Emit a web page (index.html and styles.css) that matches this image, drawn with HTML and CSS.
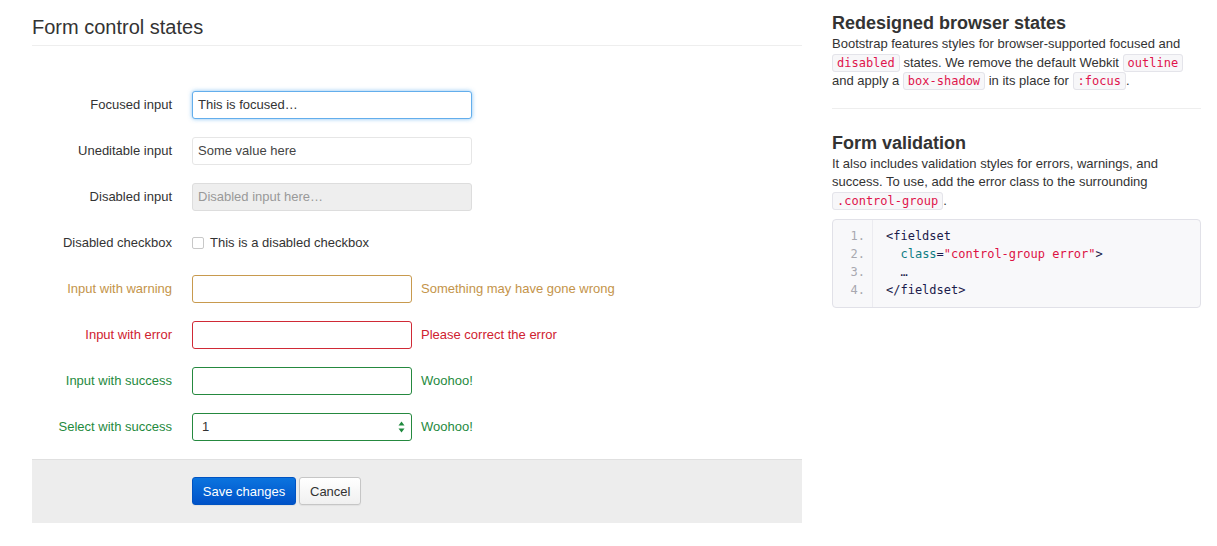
FILE: index.html
```html
<!DOCTYPE html>
<html lang="en">
<head>
<meta charset="utf-8">
<title>Form control states</title>
<link rel="stylesheet" href="styles.css">
</head>
<body>
<div class="page">
  <main class="main">
    <h2 class="title">Form control states</h2>
    <form class="form">
      <div class="group">
        <div class="label">Focused input</div>
        <div class="controls"><div class="input input-xl is-focused">This is focused…</div></div>
      </div>
      <div class="group">
        <div class="label">Uneditable input</div>
        <div class="controls"><div class="input input-xl is-uneditable">Some value here</div></div>
      </div>
      <div class="group">
        <div class="label">Disabled input</div>
        <div class="controls"><div class="input input-xl is-disabled">Disabled input here…</div></div>
      </div>
      <div class="group">
        <div class="label">Disabled checkbox</div>
        <div class="controls"><span class="checkbox"></span><span class="check-text">This is a disabled checkbox</span></div>
      </div>
      <div class="group warning">
        <div class="label">Input with warning</div>
        <div class="controls"><div class="input"></div><span class="help">Something may have gone wrong</span></div>
      </div>
      <div class="group error">
        <div class="label">Input with error</div>
        <div class="controls"><div class="input"></div><span class="help">Please correct the error</span></div>
      </div>
      <div class="group success">
        <div class="label">Input with success</div>
        <div class="controls"><div class="input"></div><span class="help">Woohoo!</span></div>
      </div>
      <div class="group success">
        <div class="label">Select with success</div>
        <div class="controls">
          <div class="input select"><span class="select-value">1</span>
            <svg class="select-arrows" width="7" height="12" viewBox="0 0 7 12"><path d="M3.5 0.5 L6.5 4.5 L0.5 4.5 Z M3.5 11.5 L6.5 7.5 L0.5 7.5 Z" fill="currentColor"/></svg>
          </div>
          <span class="help">Woohoo!</span>
        </div>
      </div>
      <div class="actions">
        <button type="button" class="btn btn-primary">Save changes</button>
        <button type="button" class="btn">Cancel</button>
      </div>
    </form>
  </main>
  <aside class="side">
    <h3 class="side-title">Redesigned browser states</h3>
    <p class="side-text">Bootstrap features styles for browser-supported focused and <code>disabled</code> states. We remove the default Webkit <code>outline</code> and apply a <code>box-shadow</code> in its place for <code>:focus</code>.</p>
    <hr class="rule">
    <h3 class="side-title">Form validation</h3>
    <p class="side-text">It also includes validation styles for errors, warnings, and success. To use, add the error class to the surrounding <code>.control-group</code>.</p>
    <ol class="codeblock">
      <li><span class="code-line"><span class="tag">&lt;fieldset</span></span></li>
      <li><span class="code-line">  <span class="attr">class</span><span class="pun">=</span><span class="str">"control-group error"</span><span class="tag">&gt;</span></span></li>
      <li><span class="code-line">  <span class="pun">…</span></span></li>
      <li><span class="code-line"><span class="tag">&lt;/fieldset&gt;</span></span></li>
    </ol>
  </aside>
</div>
</body>
</html>
```

FILE: styles.css
```css
*, *::before, *::after { box-sizing: border-box; }
html, body { margin: 0; padding: 0; background: #fff; }
body {
  font-family: "Liberation Sans", Arial, sans-serif;
  font-size: 13px;
  line-height: 18px;
  color: #333;
}
.page {
  display: flex;
  gap: 30px;
  padding: 0 16px 0 32px;
}
.main { width: 770px; flex: none; }
.side { width: 369px; flex: none; }

.title {
  margin: 0;
  padding: 15px 0 6px;
  font-size: 20px;
  line-height: 24px;
  font-weight: normal;
  color: #333;
  border-bottom: 1px solid #eee;
}
.form { margin: 0; padding-top: 45px; }
.group {
  display: flex;
  align-items: center;
  height: 28px;
  margin-bottom: 18px;
}
.label {
  width: 140px;
  text-align: right;
  flex: none;
}
.controls {
  margin-left: 20px;
  display: flex;
  align-items: center;
}
.input {
  width: 220px;
  height: 28px;
  padding: 4px 5px;
  border: 1px solid #ccc;
  border-radius: 3px;
  background: #fff;
  line-height: 18px;
  color: #555;
}
.input-xl { width: 280px; }
.is-focused {
  border-color: #63aeec;
  box-shadow: 0 0 4px rgba(82, 168, 236, 0.7);
  color: #333;
}
.is-uneditable { border-color: #e6e6e6; color: #444; }
.is-disabled { background: #eee; border-color: #ddd; color: #999; }
.checkbox {
  width: 12px;
  height: 12px;
  border: 1px solid #c8c8c8;
  border-radius: 2px;
  background: #fff;
  margin-right: 6px;
}
.check-text { color: #333; }
.help { margin-left: 9px; }

.warning .label, .warning .help { color: #c4944a; }
.warning .input { border-color: #c89a4e; }
.error .label, .error .help { color: #cf2230; }
.error .input { border-color: #d02a36; }
.success .label, .success .help { color: #1f8a3e; }
.success .input { border-color: #25893f; }

.select {
  display: flex;
  align-items: center;
  justify-content: space-between;
  padding: 4px 6px 4px 9px;
  color: #333;
}
.select-arrows { color: #1f8a3e; }

.actions {
  padding: 17px 20px 18px 160px;
  background: #ededed;
  border-top: 1px solid #e0e0e0;
  display: flex;
  gap: 3px;
}
.btn {
  height: 28px;
  padding: 0 10px;
  white-space: nowrap;
  font-family: inherit;
  font-size: 13px;
  color: #333;
  border: 1px solid #c6c6c6;
  border-radius: 3px;
  background: linear-gradient(#fff, #f0f0f0);
  box-shadow: 0 1px 1px rgba(0,0,0,0.05);
}
.btn-primary {
  width: 104px;
  padding: 0;
  color: #fff;
  border-color: #0053c2;
  background: linear-gradient(#0b74df, #0052c8);
}

.side-title {
  margin: 12px 0 0;
  font-size: 18px;
  line-height: 22px;
  font-weight: bold;
  color: #333;
}
.side-text {
  margin: 1px 0 0;
  line-height: 18.5px;
  color: #333;
}
code {
  font-family: "DejaVu Sans Mono", monospace;
  font-size: 12px;
  color: #e0144c;
  background: #f7f7f9;
  border: 1px solid #e4e4ea;
  border-radius: 3px;
  padding: 1px 4px;
}
.rule {
  border: 0;
  border-top: 1px solid #eee;
  margin: 17px 0 0;
}
.side .rule + .side-title { margin-top: 23px; }
.codeblock {
  margin: 9px 0 0;
  padding: 7px 8px 8px 0;
  list-style: none;
  counter-reset: ln;
  background: #f8f8fa;
  border: 1px solid #e1e1e8;
  border-radius: 4px;
  font-family: "DejaVu Sans Mono", monospace;
  font-size: 12px;
  line-height: 18px;
  color: #1b1b4b;
}
.codeblock li {
  counter-increment: ln;
  display: flex;
}
.code-line { white-space: pre; }
.codeblock li::before {
  content: counter(ln) ".";
  width: 40px;
  flex: none;
  padding-right: 7px;
  text-align: right;
  color: #a8a8b0;
  border-right: 1px solid #ebebf0;
  margin-right: 13px;
}
.codeblock li:first-child::before { margin-top: -7px; padding-top: 7px; }
.codeblock li:last-child::before { margin-bottom: -8px; padding-bottom: 8px; }
.tag { color: #1b1b4b; }
.attr { color: #0d7d84; }
.pun { color: #1b1b4b; }
.str { color: #dd1144; }
```
